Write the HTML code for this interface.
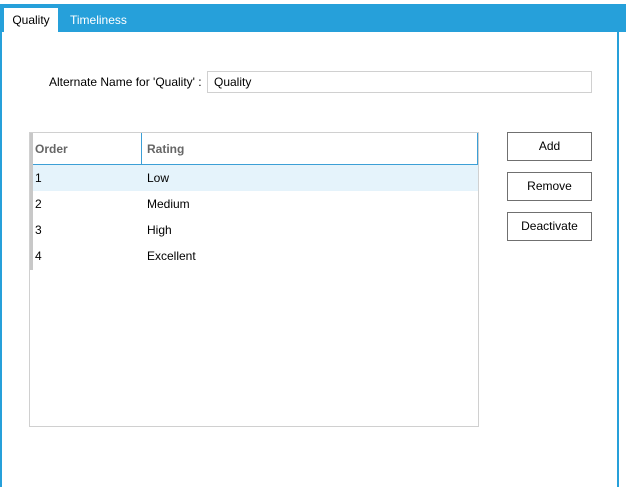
<!DOCTYPE html>
<html><head><style>
body{margin:0;width:626px;height:487px;background:#fff;position:relative;overflow:hidden;font-family:"Segoe UI","Liberation Sans",sans-serif;font-size:12px;color:#000}
div{position:absolute;box-sizing:border-box}
.t{white-space:nowrap}
.btn{left:507px;width:85px;height:29px;border:1px solid #707070;background:#fff;text-align:center;line-height:27px}
</style></head><body>
<div style="left:0;top:4px;width:626px;height:28px;background:#26a0da"></div>
<div style="left:0;top:32px;width:2px;height:455px;background:#26a0da"></div>
<div style="left:617px;top:32px;width:2px;height:455px;background:#26a0da"></div>
<div style="left:4px;top:8px;width:54px;height:24px;background:#fff;text-align:center;line-height:24px">Quality</div>
<div class="t" style="left:70px;top:8px;line-height:24px;color:#fff">Timeliness</div>
<div class="t" style="left:49px;top:75px">Alternate Name for 'Quality' :</div>
<div style="left:207px;top:71px;width:385px;height:22px;border:1px solid #d0d0d0;padding-left:6px;line-height:20px">Quality</div>
<div style="left:29px;top:132px;width:450px;height:295px;border:1px solid #d0d0d0"></div>
<div style="left:30px;top:164px;width:448px;height:1px;background:#3c9fd6"></div>
<div style="left:141px;top:133px;width:1px;height:31px;background:#3c9fd6"></div>
<div style="left:477px;top:133px;width:1px;height:31px;background:#3c9fd6"></div>
<div style="left:30px;top:133px;width:3px;height:137px;background:#c8c8c8"></div>
<div class="t" style="left:35px;top:142px;color:#666;font-weight:bold">Order</div>
<div class="t" style="left:147px;top:142px;color:#666;font-weight:bold">Rating</div>
<div style="left:33px;top:165px;width:445px;height:26px;background:#e5f3fb"></div>
<div class="t" style="left:35px;top:171px">1</div><div class="t" style="left:147px;top:171px">Low</div>
<div class="t" style="left:35px;top:197px">2</div><div class="t" style="left:147px;top:197px">Medium</div>
<div class="t" style="left:35px;top:223px">3</div><div class="t" style="left:147px;top:223px">High</div>
<div class="t" style="left:35px;top:249px">4</div><div class="t" style="left:147px;top:249px">Excellent</div>
<div class="btn" style="top:132px">Add</div>
<div class="btn" style="top:172px">Remove</div>
<div class="btn" style="top:212px">Deactivate</div>
</body></html>
